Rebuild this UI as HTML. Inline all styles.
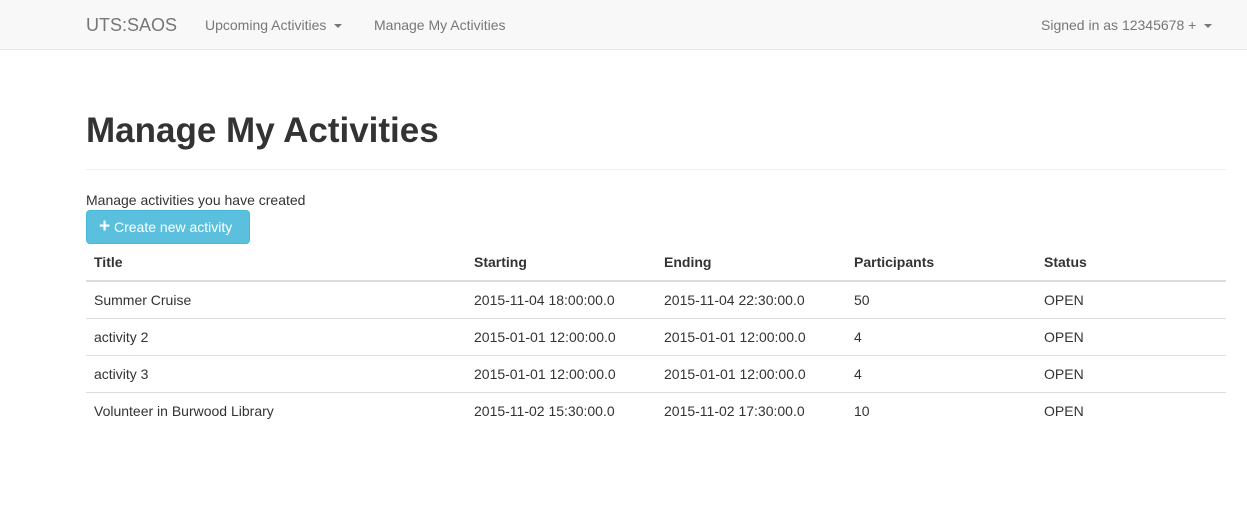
<!DOCTYPE html>
<html><head><style>
body{margin:0;font-family:"Liberation Sans",Helvetica,Arial,sans-serif;font-size:14px;color:#333;background:#fff;width:1247px;height:517px;overflow:hidden;position:relative}
.nav{position:absolute;left:0;top:0;width:1247px;height:50px;background:#f8f8f8;border-bottom:1px solid #e7e7e7;box-sizing:border-box}
.nav span{position:absolute;top:0;line-height:50px;color:#777}
.caret{display:inline-block;width:0;height:0;border-top:4px solid #777;border-left:4px solid transparent;border-right:4px solid transparent;vertical-align:middle;margin-left:4px}
h1{position:absolute;left:86px;top:108px;margin:0;font-size:35px;font-weight:bold;line-height:46px;color:#333}
.hr{position:absolute;left:86px;top:169px;width:1140px;border-top:1px solid #eee}
.sub{position:absolute;left:86px;top:191px;line-height:18px}
.btn{position:absolute;left:86px;top:210px;width:164px;height:34px;box-sizing:border-box;background:#5bc0de;border:1px solid #46b8da;border-radius:4px;color:#fff;line-height:32px;padding-left:12px}
table{position:absolute;left:86px;top:244px;width:1140px;border-collapse:collapse}
td,th{text-align:left;padding:0 8px;height:36px;border-top:1px solid #ddd;vertical-align:middle}
th{border-top:0;border-bottom:2px solid #ddd;font-weight:bold}
</style></head><body>
<div class="nav">
<span style="left:86px;font-size:18px">UTS:SAOS</span>
<span style="left:205px">Upcoming Activities <i class="caret"></i></span>
<span style="left:374px">Manage My Activities</span>
<span style="left:1041px">Signed in as 12345678 + <i class="caret"></i></span>
</div>
<h1>Manage My Activities</h1>
<div class="hr"></div>
<div class="sub">Manage activities you have created</div>
<div class="btn"><b style="font-size:19px">+</b> Create new activity</div>
<table>
<colgroup><col style="width:380px"><col style="width:190px"><col style="width:190px"><col style="width:190px"><col></colgroup>
<tr><th>Title</th><th>Starting</th><th>Ending</th><th>Participants</th><th>Status</th></tr>
<tr><td>Summer Cruise</td><td>2015-11-04 18:00:00.0</td><td>2015-11-04 22:30:00.0</td><td>50</td><td>OPEN</td></tr>
<tr><td>activity 2</td><td>2015-01-01 12:00:00.0</td><td>2015-01-01 12:00:00.0</td><td>4</td><td>OPEN</td></tr>
<tr><td>activity 3</td><td>2015-01-01 12:00:00.0</td><td>2015-01-01 12:00:00.0</td><td>4</td><td>OPEN</td></tr>
<tr><td>Volunteer in Burwood Library</td><td>2015-11-02 15:30:00.0</td><td>2015-11-02 17:30:00.0</td><td>10</td><td>OPEN</td></tr>
</table>
</body></html>
